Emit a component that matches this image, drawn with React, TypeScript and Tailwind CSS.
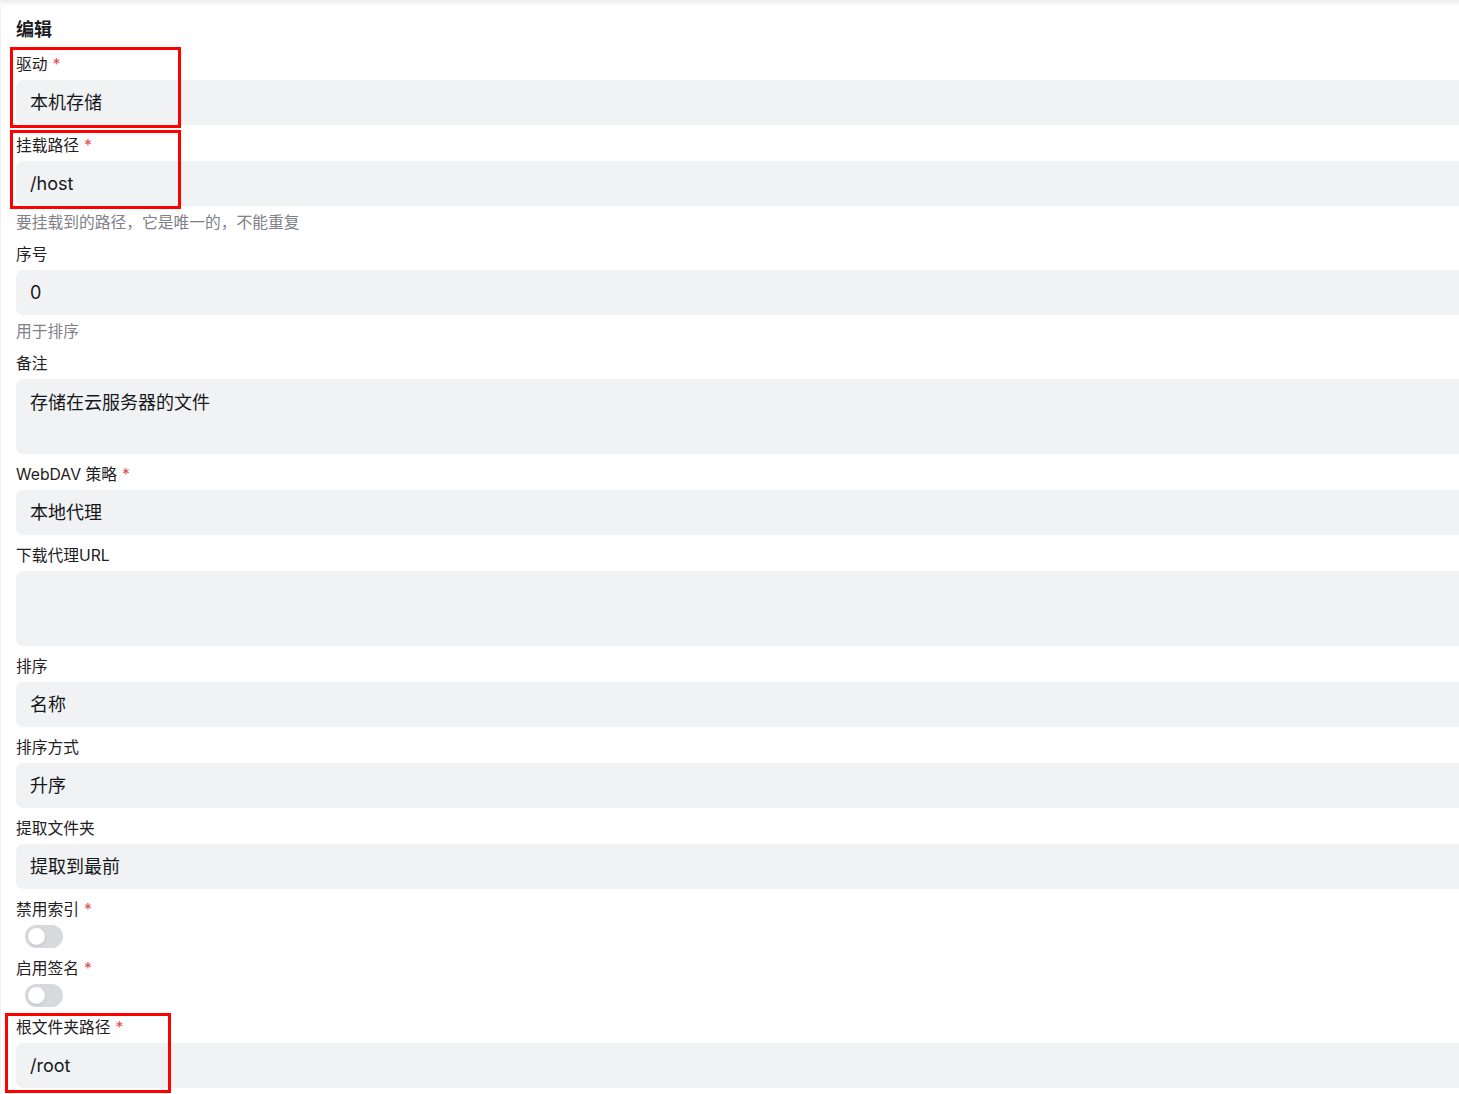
import React from 'react';

type Field =
  | { kind: 'input'; label: string; value: string; required?: boolean; help?: string }
  | { kind: 'textarea'; label: string; value: string; required?: boolean; help?: string }
  | { kind: 'switch'; label: string; required?: boolean };

const fields: Field[] = [
  { kind: 'input', label: '驱动', value: '本机存储', required: true },
  { kind: 'input', label: '挂载路径', value: '/host', required: true, help: '要挂载到的路径，它是唯一的，不能重复' },
  { kind: 'input', label: '序号', value: '0', help: '用于排序' },
  { kind: 'textarea', label: '备注', value: '存储在云服务器的文件' },
  { kind: 'input', label: 'WebDAV 策略', value: '本地代理', required: true },
  { kind: 'textarea', label: '下载代理URL', value: '' },
  { kind: 'input', label: '排序', value: '名称' },
  { kind: 'input', label: '排序方式', value: '升序' },
  { kind: 'input', label: '提取文件夹', value: '提取到最前' },
  { kind: 'switch', label: '禁用索引', required: true },
  { kind: 'switch', label: '启用签名', required: true },
  { kind: 'input', label: '根文件夹路径', value: '/root', required: true },
];

const Label = ({ text, required }: { text: string; required?: boolean }) => (
  <div className="text-[15.75px] leading-[20px] mb-[5px] text-[#1f2023] whitespace-nowrap">
    {text}
    {required && <span className="text-[#e5484d] ml-[5px]">*</span>}
  </div>
);

const Switch = () => (
  <div className="ml-[9px] w-[38px] h-[23px] rounded-full bg-[#d7d9dd] flex items-center px-[3px]">
    <div className="w-[17px] h-[17px] rounded-full bg-white shadow-sm" />
  </div>
);

export default function App() {
  return (
    <div
      className="relative min-h-[1094px] w-full overflow-hidden bg-white"
      style={{ fontFamily: 'Inter, "Noto Sans CJK SC", sans-serif' }}
    >
      <div className="h-[6px] bg-gradient-to-b from-[#ececee] to-white" />
      <div className="border-l border-[#f1f1f3] pl-[15px] pt-[10px] flex flex-col gap-[11px]">
        <h2 className="text-[18px] leading-[28px] font-bold text-[#1a1b1e]">编辑</h2>
        {fields.map((f) => (
          <div key={f.label} className="relative flex flex-col">
            <Label text={f.label} required={f.required} />
            {f.kind === 'input' && (
              <div className="w-[1480px] h-[45px] rounded-[7px] bg-[#f1f2f4] pl-[14px] flex items-center text-[18px] text-[#16171a]">
                {f.value}
              </div>
            )}
            {f.kind === 'textarea' && (
              <div className="w-[1480px] h-[75px] rounded-[7px] bg-[#f1f2f4] pl-[14px] pt-[11px] text-[18px] leading-[26px] text-[#16171a]">
                {f.value}
              </div>
            )}
            {f.kind === 'switch' && <Switch />}
            {f.kind !== 'switch' && f.help && (
              <div className="mt-[6px] text-[15.75px] leading-[22px] text-[#7e8187]">{f.help}</div>
            )}
          </div>
        ))}
      </div>

      {/* annotation boxes */}
      <div className="absolute left-[10px] top-[47px] w-[171px] h-[81px] border-[3px] border-[#ff0000]" />
      <div className="absolute left-[10px] top-[130px] w-[171px] h-[79px] border-[3px] border-[#ff0000]" />
      <div className="absolute left-[5px] top-[1013px] w-[166px] h-[80px] border-[3px] border-[#ff0000]" />
    </div>
  );
}
